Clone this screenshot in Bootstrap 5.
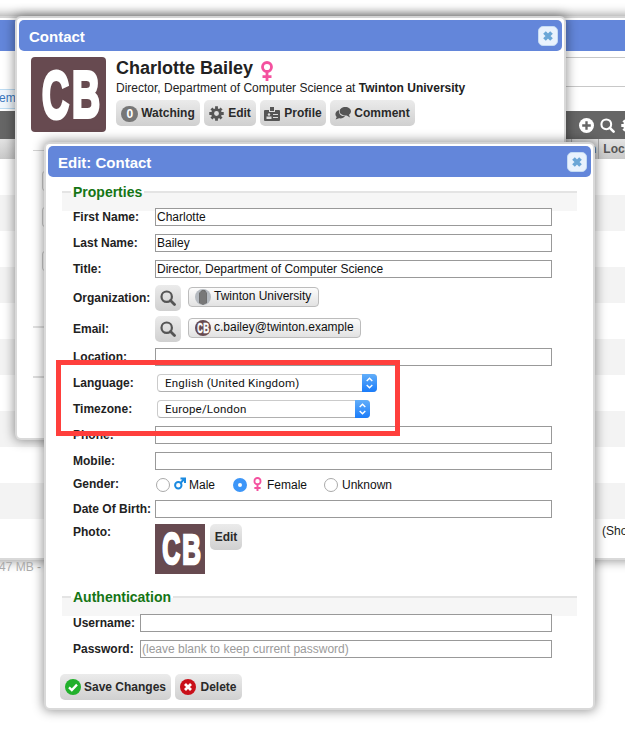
<!DOCTYPE html>
<html lang="en">
<head>
<meta charset="utf-8">
<meta name="viewport" content="width=device-width, initial-scale=1">
<title>Edit: Contact</title>
<link href="https://cdn.jsdelivr.net/npm/bootstrap@5.3.0/dist/css/bootstrap.min.css" rel="stylesheet">
<style>
body{font:12px/16px "Liberation Sans",Arial,sans-serif;color:#222;background:#fff}
.desktop{width:625px;height:734px}
.win{position:absolute;background:#fff;border:2px solid #d9d9d9;border-top-color:#d4d4d4;padding:2px;border-radius:6px;box-shadow:0 0 11px 1px rgba(0,0,0,.42)}
.win-base{left:-30px;top:16px;width:700px;height:544px}
.win-contact{left:15px;top:16px;width:551px;height:424px}
.win-edit{left:44px;top:142px;width:551px;height:568px}
.titlebar{height:31px;background:#6386da;border-radius:5px;color:#fff;font-size:15px;font-weight:bold;padding:2px 4px 0 10px}
.closer{width:20px;height:20px;border-radius:5px;background:#e9f2fd;border:1px solid #c5dbf3;margin-top:-2px}
.avatar{background:#674a50;display:block}
.avatar text,.chip text{font-family:"Liberation Sans",Arial,sans-serif;font-weight:bold;fill:#fff;stroke:#fff}
.person{font-size:18px;line-height:22px;font-weight:bold}
.tool{height:26px;border:0;border-radius:5px;background:linear-gradient(#ebebeb,#d0d0d0);color:#2a2a2a;font-size:12px;line-height:16px;font-weight:bold;padding:0;display:inline-flex;align-items:center;justify-content:center;flex:none}
.tool span{margin-top:-1px}
.w26{width:26px}.w32{width:32px}.w52{width:52px}.w66{width:66px}.w67{width:67px}.w84{width:84px}.w111{width:111px}
.tool .count{width:17px;height:16px;border-radius:8px;background:#777;color:#fff;line-height:16px;text-align:center;margin-top:1px}
.group-head{height:20px;margin:0 14px;border-top:2px solid #e4e4e4;background:#f6f6f6}
.group-head span{display:block;width:fit-content;font-size:14px;line-height:16px;font-weight:bold;color:#157515;margin-left:9px;padding:0 2px;background:linear-gradient(#fff 9px,#f6f6f6 9px);transform:translateY(-9px)}
.fields{padding:0 39px 0 25px;margin-top:-7px;position:relative}
.fld{height:26px;display:flex;align-items:center}
.fld>label{width:82px;flex:none;font-weight:bold;white-space:nowrap}
.fields-auth .fld>label{width:67px}
.fld.tall{height:31px}.fld.short{height:22px}.fld.photo{height:53px;align-items:flex-start;padding-top:2px}
.box{flex:1;height:18px;border:1px solid #999;border-radius:0;padding:0 1px;background:#fff;color:#111;font-size:12px;line-height:16px;min-width:0;outline:0}
.box::placeholder{color:#9b9b9b;opacity:1}
.chip{height:20px;border:1px solid #bcbcbc;border-radius:4px;background:linear-gradient(#fcfcfc,#e2e2e2);color:#111;display:flex;align-items:center;padding-left:6px;margin:-2px 0 0 7px;white-space:nowrap}
.chip svg{margin-right:3px}
.chip span{margin-top:-1px}
.chip-org{width:131px}.chip-mail{width:173px}
.picker{height:18px;border:1px solid #cbcbcb;border-bottom-color:#b0b0b0;border-radius:4px;background:#fff;color:#111;margin-left:2px;padding-left:7px;display:flex;justify-content:space-between;font:11.5px/16px Roboto,sans-serif;letter-spacing:.2px}
.picker svg{margin:-1px -1px 0 0}
.pick-lang{width:220px}.pick-zone{width:213px}
.dot{width:14px;height:14px;border-radius:50%;border:1px solid #aaa;background:#fff;flex:none}
.dot.on{border:5px solid #3d96f8;background:#fff}
.option{display:flex;align-items:center;color:#111}
.option-m{width:77px}.option-f{width:91px}
.frame{position:absolute;left:56px;top:360px;width:344px;height:76px;border:5px solid #ff3f3c}
.stripes{height:399px;background:repeating-linear-gradient(#fff 0 36px,#f3f3f3 36px 72px);background-size:100% 360px;background-repeat:no-repeat}
.toolbar{height:28px;background:#666;padding-left:605px;gap:6px}
.columns{height:20px;background:linear-gradient(#e3e3e3,#c9c9c9);font-weight:bold;color:#555;line-height:20px;padding-left:597px}
.columns span{padding-right:5px;border-left:1px solid #aaa}
.upper{height:60px;padding-top:6px}
.upper .rule{height:30px;border:solid #c8c8c8;border-width:1px 0}
.tabtxt{height:20px;width:80px;margin-top:3px;border:1px solid #bcdcf3;background:#f0f7fd;color:#3c78bd;line-height:17px;padding-left:24px}
.upper-l{width:110px;margin-top:29px}
.status{position:absolute;left:-1px;top:559px;color:#aaa;white-space:nowrap}
.under{margin:18px 14px 0;border-top:1px solid #d4d4d4;height:178px;border-bottom:2px solid #e0e0e0;padding:12px 0 0 9px;color:#b9a19b;font-weight:bold}
.under div{height:20px}
.under i{display:block;width:40px;height:20px;border:1px solid #ccc;border-radius:3px}
.under-b{margin:48px 14px 0;border-top:2px solid #ddd;height:42px}
</style>
<script src="https://cdn.jsdelivr.net/npm/bootstrap@5.3.0/dist/js/bootstrap.bundle.min.js"></script>
</head>
<body>
<svg width="0" height="0" class="position-absolute">
<defs>
<symbol id="cross" viewBox="0 0 12 12"><path d="M3 3l6 6M9 3l-6 6" stroke="#6ba6d6" stroke-width="3.2"/></symbol>
<symbol id="lens" viewBox="0 0 16 16"><circle cx="6.7" cy="6.7" r="5.2" fill="none" stroke="currentColor" stroke-width="2.2"/><path d="M10.5 10.5l4 4" stroke="currentColor" stroke-width="2.8" stroke-linecap="round"/></symbol>
<symbol id="gear" viewBox="0 0 16 16"><g stroke="currentColor" stroke-width="3"><path d="M8 .3V4M8 12v3.700M.3 8H4M12 8h3.700M2.600 2.600l2.600 2.600M10.800 10.800l2.600 2.600M2.600 13.400l2.600-2.600M10.800 5.200l2.600-2.600"/><circle cx="8" cy="8" r="4.100" fill="none" stroke-width="3"/></g></symbol>
<symbol id="venus" viewBox="0 0 12 20"><g fill="none" stroke="#f4519f"><circle cx="6" cy="6" r="4.500" stroke-width="2.800"/><path d="M6 10.500V20M1.500 15.700h9" stroke-width="2.800"/></g></symbol>
<symbol id="updown" viewBox="0 0 15 18"><path d="M0 0h11a4 4 0 0 1 4 4v10a4 4 0 0 1-4 4H0z" fill="url(#blue)"/><path d="M4.700 7l2.800-2.800L10.300 7M4.700 11l2.800 2.800L10.300 11" fill="none" stroke="#fff" stroke-width="1.400"/></symbol>
<linearGradient id="blue" x2="0" y2="1"><stop stop-color="#62aef9"/><stop offset="1" stop-color="#1a7cfa"/></linearGradient>
</defs>
</svg>
<main class="desktop position-relative overflow-hidden">
  <section class="win win-base">
    <div class="titlebar"></div>
    <div class="upper d-flex">
      <div class="upper-l"><div class="tabtxt">em</div></div>
      <div class="flex-fill"><div class="rule"></div></div>
    </div>
    <div class="toolbar d-flex align-items-center text-white">
      <svg width="15" height="15" viewBox="0 0 14 14"><circle cx="7" cy="7" r="7" fill="#fff"/><path d="M7 3v8M3 7h8" stroke="#666" stroke-width="2.200"/></svg>
      <svg width="15" height="15"><use href="#lens"/></svg>
      <svg width="15" height="15"><use href="#gear"/></svg>
    </div>
    <div class="columns d-flex"><span style="padding:0 2px 0 17px">n</span><span class="ps-1">Location</span></div>
    <div class="stripes d-flex align-items-end"><div class="text-nowrap" style="padding:0 0 19px 628px">(Showing 20)</div></div>
  </section>
  <div class="status">47 MB - Mem</div>

  <section class="win win-contact">
    <header class="titlebar d-flex justify-content-between align-items-center"><span>Contact</span><span class="closer d-flex align-items-center justify-content-center"><svg width="14" height="14"><use href="#cross"/></svg></span></header>
    <div class="d-flex" style="padding:6px 0 0 12px">
      <svg class="avatar rounded-1" width="75" height="75" viewBox="0 0 75 75"><text x="11" y="60.500" font-size="66" stroke-width="4" textLength="27" lengthAdjust="spacingAndGlyphs">C</text><text x="41" y="60" font-size="65" stroke-width="4" textLength="28" lengthAdjust="spacingAndGlyphs">B</text></svg>
      <div style="padding-left:10px">
        <div class="d-flex person"><span>Charlotte Bailey</span><svg class="mt-1" style="margin-left:8px" width="12" height="20"><use href="#venus"/></svg></div>
        <div class="text-nowrap" style="margin-top:-1px">Director, Department of Computer Science at <b>Twinton University</b></div>
        <div class="d-flex" style="gap:4px;margin-top:4px">
          <button class="tool w84" type="button"><span class="count" style="margin-right:3px">0</span><span>Watching</span></button>
          <button class="tool w52" type="button"><svg class="me-1" width="15" height="15" color="#555"><use href="#gear"/></svg><span>Edit</span></button>
          <button class="tool w66" type="button"><svg class="me-1" style="margin-top:1px" width="16" height="14" viewBox="0 0 16 14"><path d="M1 3h4v2h6V3h4a1 1 0 0 1 1 1v9a1 1 0 0 1-1 1H1a1 1 0 0 1-1-1V4a1 1 0 0 1 1-1zM6 0h4v4H6z" fill="#555"/><circle cx="5" cy="7.500" r="1.200" fill="#ddd"/><path d="M2.500 12V9.500h5V12zM9 7h5v1H9zM9 10h5v1H9z" fill="#ddd"/></svg><span>Profile</span></button>
          <button class="tool" type="button" style="width:85px"><svg style="margin-right:3px" width="16" height="14" viewBox="0 0 16 14"><path d="M4 4C0 5.500-.5 9 1.700 11L.6 13.500 4 12.300c2.500.5 5-.3 6-2.300C6 10.500 3.500 8 4 4z" fill="#555"/><path d="M10.300 1c3.200 0 5.700 1.900 5.700 4.300 0 1.400-.8 2.600-2 3.400l1 2.800-3.300-2C8 9.900 4.600 8 4.600 5.300 4.600 2.900 7.100 1 10.300 1z" fill="#555"/></svg><span>Comment</span></button>
        </div>
      </div>
    </div>
    <div class="under"><i class="mt-2"></i><i class="mt-3"></i><i class="mt-4"></i></div>
    <div class="under-b"></div>
  </section>

  <section class="win win-edit">
    <header class="titlebar d-flex justify-content-between align-items-center"><span>Edit: Contact</span><span class="closer d-flex align-items-center justify-content-center"><svg width="14" height="14"><use href="#cross"/></svg></span></header>
    <form>
      <div class="group-head" style="margin-top:14px"><span>Properties</span></div>
      <div class="fields">
        <div class="fld"><label>First Name:</label><input class="box" value="Charlotte"></div>
        <div class="fld"><label>Last Name:</label><input class="box" value="Bailey"></div>
        <div class="fld"><label>Title:</label><input class="box" value="Director, Department of Computer Science"></div>
        <div class="fld tall"><label>Organization:</label><span class="tool w26"><svg width="16" height="16" color="#555"><use href="#lens"/></svg></span>
          <div class="chip chip-org"><svg width="16" height="16" viewBox="0 0 16 16"><circle cx="8" cy="8" r="8" fill="#b5bac0"/><path d="M4 14V4l3-3h3l2 3v10l-4 2z" fill="#6f6f6f"/><path d="M6 3v12M8 2v13M10 3v12" stroke="#8a8a8a" stroke-width=".7"/></svg><span>Twinton University</span></div></div>
        <div class="fld tall"><label>Email:</label><span class="tool w26"><svg width="16" height="16" color="#555"><use href="#lens"/></svg></span>
          <div class="chip chip-mail"><svg width="16" height="16" viewBox="0 0 16 16"><circle cx="8" cy="8" r="8" fill="#674a50"/><text x="2.200" y="12.800" font-size="14" stroke-width=".5" textLength="5.500" lengthAdjust="spacingAndGlyphs">C</text><text x="8.300" y="12.800" font-size="14" stroke-width=".5" textLength="6" lengthAdjust="spacingAndGlyphs">B</text></svg><span>c.bailey@twinton.example</span></div></div>
        <div class="fld"><label>Location:</label><input class="box"></div>
        <div class="fld"><label>Language:</label><div class="picker pick-lang"><span>English (United Kingdom)</span><svg width="15" height="18"><use href="#updown"/></svg></div></div>
        <div class="fld"><label>Timezone:</label><div class="picker pick-zone"><span>Europe/London</span><svg width="15" height="18"><use href="#updown"/></svg></div></div>
        <div class="fld"><label>Phone:</label><input class="box"></div>
        <div class="fld"><label>Mobile:</label><input class="box"></div>
        <div class="fld short"><label style="margin-top:-2px">Gender:</label>
          <div class="option option-m"><span class="dot" style="margin:0 4px 0 1px"></span><svg width="12" height="13" viewBox="0 0 12 13" style="margin:-3px 3px 0 0"><g fill="none" stroke="#1b8ae0" stroke-width="2"><circle cx="4.300" cy="8.200" r="3.200"/><path d="M6.500 6l3.800-4M6.500 1.500H11V6"/></g></svg><span>Male</span></div>
          <div class="option option-f"><span class="dot on" style="margin:0 6px 0 1px"></span><svg width="9" height="14" viewBox="0 0 12 20" style="margin:-3px 5px 0 0"><use href="#venus"/></svg><span>Female</span></div>
          <div class="option"><span class="dot" style="margin:0 4px 0 1px"></span><span>Unknown</span></div></div>
        <div class="fld"><label>Date Of Birth:</label><input class="box"></div>
        <div class="fld photo"><label>Photo:</label><svg class="avatar" width="50" height="50" viewBox="0 0 75 75"><text x="11" y="60.500" font-size="66" stroke-width="4" textLength="27" lengthAdjust="spacingAndGlyphs">C</text><text x="41" y="60" font-size="65" stroke-width="4" textLength="28" lengthAdjust="spacingAndGlyphs">B</text></svg><button class="tool w32" type="button" style="margin-left:5px"><span>Edit</span></button></div>
      </div>
      <div class="group-head" style="margin-top:21px"><span>Authentication</span></div>
      <div class="fields fields-auth" style="margin-top:-6px">
        <div class="fld"><label>Username:</label><input class="box"></div>
        <div class="fld"><label>Password:</label><input class="box" placeholder="(leave blank to keep current password)"></div>
      </div>
      <div class="d-flex" style="gap:4px;padding:12px 0 0 12px">
        <button class="tool w111" type="button"><svg style="margin-right:3px" width="16" height="16" viewBox="0 0 16 16"><circle cx="8" cy="8" r="8" fill="#21b02b"/><path d="M4 8.300l2.800 2.700L12 5.600" fill="none" stroke="#fff" stroke-width="2.300"/></svg><span>Save Changes</span></button>
        <button class="tool w67" type="button"><svg class="me-1" width="16" height="16" viewBox="0 0 16 16"><circle cx="8" cy="8" r="8" fill="#c9101a"/><path d="M5 5l6 6M11 5l-6 6" stroke="#fff" stroke-width="2.800"/></svg><span>Delete</span></button>
      </div>
    </form>
  </section>
  <div class="frame"></div>
</main>
</body>
</html>
